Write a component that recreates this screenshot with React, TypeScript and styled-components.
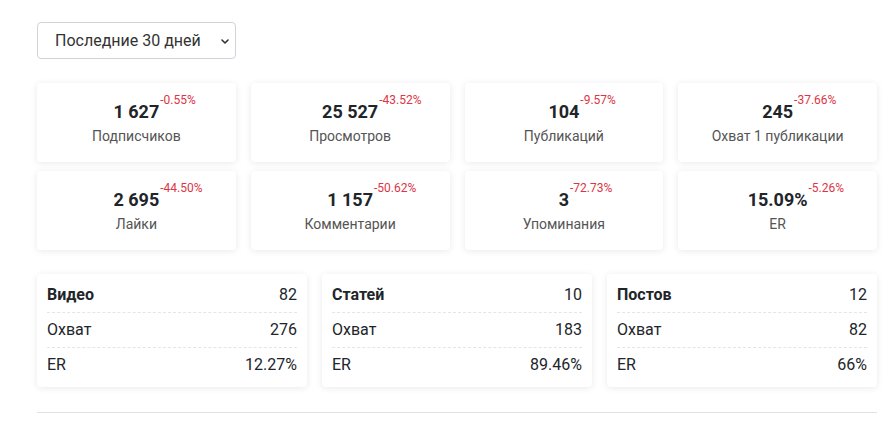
import styled, { createGlobalStyle } from 'styled-components';

type Stat = {
  value: string;
  change: string;
  label: string;
};

type Summary = {
  title: string;
  count: string;
  reach: string;
  er: string;
};

const stats: Stat[] = [
  { value: '1 627', change: '-0.55%', label: 'Подписчиков' },
  { value: '25 527', change: '-43.52%', label: 'Просмотров' },
  { value: '104', change: '-9.57%', label: 'Публикаций' },
  { value: '245', change: '-37.66%', label: 'Охват 1 публикации' },
  { value: '2 695', change: '-44.50%', label: 'Лайки' },
  { value: '1 157', change: '-50.62%', label: 'Комментарии' },
  { value: '3', change: '-72.73%', label: 'Упоминания' },
  { value: '15.09%', change: '-5.26%', label: 'ER' },
];

const summaries: Summary[] = [
  { title: 'Видео', count: '82', reach: '276', er: '12.27%' },
  { title: 'Статей', count: '10', reach: '183', er: '89.46%' },
  { title: 'Постов', count: '12', reach: '82', er: '66%' },
];

function App() {
  return (
    <>
      <GlobalStyle />
      <Page>
        <SelectWrap>
          <PeriodSelect defaultValue="30">
            <option value="7">Последние 7 дней</option>
            <option value="30">Последние 30 дней</option>
            <option value="90">Последние 90 дней</option>
          </PeriodSelect>
          <Chevron width="8" height="5" viewBox="0 0 8 5">
            <path d="M1 1l3 3 3-3" fill="none" stroke="#333" strokeWidth="1.6" strokeLinecap="round" strokeLinejoin="round" />
          </Chevron>
        </SelectWrap>

        <StatGrid>
          {stats.map((stat) => (
            <StatCard key={stat.label}>
              <ValueLine>
                <Value>
                  {stat.value}
                  <Change>{stat.change}</Change>
                </Value>
              </ValueLine>
              <StatLabel>{stat.label}</StatLabel>
            </StatCard>
          ))}
        </StatGrid>

        <SummaryGrid>
          {summaries.map((item) => (
            <SummaryCard key={item.title}>
              <SummaryRow>
                <SummaryTitle>{item.title}</SummaryTitle>
                <span>{item.count}</span>
              </SummaryRow>
              <SummaryRow>
                <span>Охват</span>
                <span>{item.reach}</span>
              </SummaryRow>
              <SummaryRow>
                <span>ER</span>
                <span>{item.er}</span>
              </SummaryRow>
            </SummaryCard>
          ))}
        </SummaryGrid>

        <Divider />
      </Page>
    </>
  );
}

const GlobalStyle = createGlobalStyle`
  body {
    margin: 0;
    background: #fff;
    font-family: Roboto, "Liberation Sans", sans-serif;
    color: #212529;
  }
`

const Page = styled.div`
  width: 840px;
  padding: 22px 0 0 37px;
`

const SelectWrap = styled.div`
  position: relative;
  width: 199px;
`

const PeriodSelect = styled.select`
  display: block;
  width: 100%;
  height: 37px;
  padding: 0 24px 0 17px;
  font-family: Roboto, "Liberation Sans", sans-serif;
  font-size: 16px;
  color: #333;
  background: #fff;
  border: 1px solid #ced4da;
  border-radius: 4px;
  outline: none;
  appearance: none;
`

const Chevron = styled.svg`
  position: absolute;
  right: 7px;
  top: 17px;
  pointer-events: none;
`

const StatGrid = styled.div`
  display: grid;
  grid-template-columns: repeat(4, 1fr);
  column-gap: 15px;
  row-gap: 9px;
  margin-top: 24px;
`

const StatCard = styled.div`
  padding: 15px 16px 15px;
  text-align: center;
  background: #fff;
  border-radius: 4px;
  box-shadow: 0 1px 7px rgba(0, 0, 0, 0.09);
`

const ValueLine = styled.div`
  line-height: 27px;
`

const Value = styled.span`
  position: relative;
  font-size: 18px;
  font-weight: 700;
  color: #212529;
`

const Change = styled.span`
  position: absolute;
  left: 100%;
  top: -7px;
  margin-left: 1px;
  font-size: 12px;
  font-weight: 400;
  line-height: 12px;
  color: #dc3545;
  white-space: nowrap;
`

const StatLabel = styled.div`
  font-size: 14px;
  line-height: 21px;
  color: #555;
`

const SummaryGrid = styled.div`
  display: grid;
  grid-template-columns: repeat(3, 1fr);
  gap: 15px;
  margin-top: 24px;
`

const SummaryCard = styled.div`
  padding: 4px 10px 5px;
  background: #fff;
  border-radius: 4px;
  box-shadow: 0 1px 7px rgba(0, 0, 0, 0.09);
`

const SummaryRow = styled.div`
  display: flex;
  justify-content: space-between;
  padding: 5px 0;
  font-size: 16px;
  line-height: 24px;
  color: #212529;
  border-bottom: 1px dashed #e3e5e8;

  &:last-child {
    border-bottom: none;
  }
`

const SummaryTitle = styled.span`
  font-weight: 700;
`

const Divider = styled.hr`
  margin: 25px 0 0;
  border: none;
  border-top: 1px solid #e2e2e2;
`

export default App;
